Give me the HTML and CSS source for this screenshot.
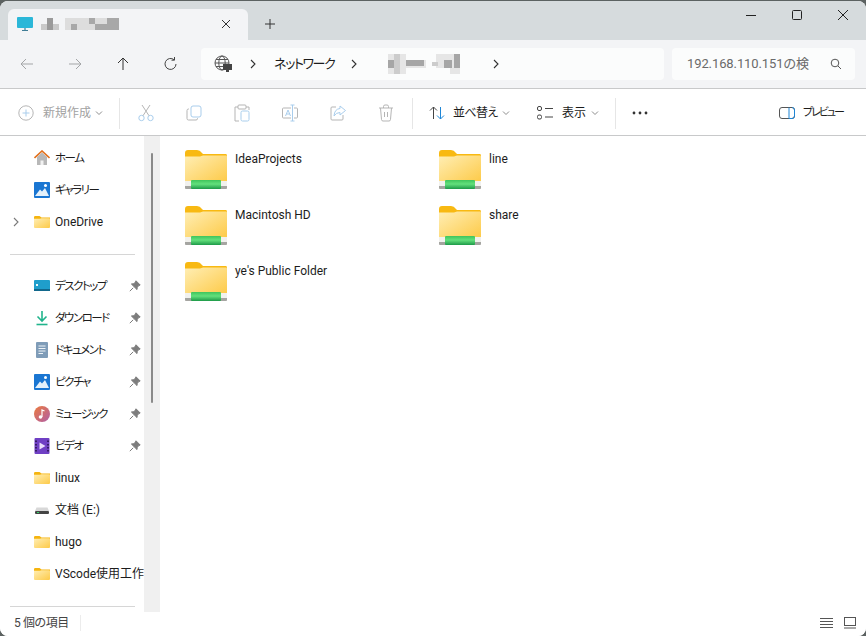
FILE: index.html
```html
<!DOCTYPE html>
<html lang="ja">
<head>
    <meta charset="UTF-8">
    <title>192.168.110.151</title>
    <link rel="stylesheet" href="styles.css">
</head>
<body>
<svg class="defs" width="0" height="0">
    <defs>
        <linearGradient id="fbody" x1="0" y1="0" x2="1" y2="1">
            <stop offset="0" stop-color="#ffeeb4"/>
            <stop offset="1" stop-color="#fdca48"/>
        </linearGradient>
        <linearGradient id="fgreen" x1="0" y1="0" x2="0" y2="1">
            <stop offset="0" stop-color="#3fc45c"/>
            <stop offset=".45" stop-color="#63e07c"/>
            <stop offset="1" stop-color="#1d9a48"/>
        </linearGradient>
        <symbol id="folder" viewBox="0 0 16 16">
            <path d="M0 3.2Q0 2 1.2 2H5.5L7.5 3.5H16V6H0Z" fill="#f5b40f"/>
            <path d="M0 4.8H6L7.5 4.3H15Q16 4.3 16 5.3V13Q16 14 15 14H1Q0 14 0 13Z" fill="url(#fbody)"/>
        </symbol>
        <symbol id="netfolder" viewBox="0 0 42 39">
            <path d="M0 3Q0 0 3 0H12Q15 0 17 3L18 4H41Q42 4 42 6V12H0Z" fill="#f8b912"/>
            <path d="M0 6.500H15L18 5.500H41Q42 5.500 42 6.500V32H0Z" fill="url(#fbody)"/>
            <path d="M0 31H42V38Q42 39 41 39H1Q0 39 0 38Z" fill="#f1f1ee"/>
            <path d="M0 36H42V38Q42 39 41 39H1Q0 39 0 38Z" fill="#a5a5a1"/>
            <rect x="6" y="30" width="30" height="9" rx="1" fill="url(#fgreen)"/>
        </symbol>
        <symbol id="pin" viewBox="0 0 12 12">
            <path d="M7 .8 11.2 5 9.9 5.6 8.3 7.2 8 9.6 2.4 4 4.8 3.7 6.4 2.1ZM4.2 7.8.8 11.2" fill="#7d7d7d" stroke="#7d7d7d"/>
        </symbol>
        <symbol id="chev" viewBox="0 0 8 12">
            <path d="M2 2 6 6 2 10" fill="none" stroke="currentColor" stroke-width="1.1"/>
        </symbol>
        <symbol id="down" viewBox="0 0 8 6">
            <path d="M1 1.5 4 4.5 7 1.5" fill="none" stroke="#8c8c8c"/>
        </symbol>
    </defs>
</svg>

<div class="window">
    <!-- tabs -->
    <div class="titlebar">
        <div class="tab">
            <svg class="tab-icon" width="16" height="16" viewBox="0 0 16 16">
                <rect y="1" width="16" height="11" rx="1" fill="#2bb7d8"/>
                <path d="M5 14.5H11M8 12V14.5" stroke="#3f7d96" stroke-width="1.2"/>
            </svg>
            <svg class="blur" width="80" height="14" viewBox="0 0 80 14">
                <path d="M0 7H18V13H0Z" fill="#c9c9c9"/>
                <path d="M6 1H12V13H6Z" fill="#9a9a9a"/>
                <path d="M24 1H78V13H24Z" fill="#dddddd"/>
                <path d="M30 7H36V13H30ZM48 1H54V7H48ZM54 7H66V13H54ZM66 1H78V13H66Z" fill="#a8a8a8"/>
            </svg>
            <svg class="tab-close" width="12" height="12" viewBox="0 0 12 12">
                <path d="M2 2 10 10M10 2 2 10" stroke="#333"/>
            </svg>
        </div>
        <svg class="tab-new" width="12" height="12" viewBox="0 0 12 12">
            <path d="M6 1V11M1 6H11" stroke="#333"/>
        </svg>
        <div class="winbtns">
            <svg width="12" height="12" viewBox="0 0 12 12"><path d="M1 6.5H11" stroke="#222"/></svg>
            <svg width="12" height="12" viewBox="0 0 12 12"><rect x="1.5" y="1.5" width="9" height="9" rx="1" fill="none" stroke="#222"/></svg>
            <svg width="12" height="12" viewBox="0 0 12 12"><path d="M1 1 11 11M11 1 1 11" stroke="#222"/></svg>
        </div>
    </div>

    <!-- address row -->
    <div class="navbar">
        <div class="navbtns">
            <svg width="16" height="16" viewBox="0 0 16 16"><path d="M14 8H2M7 3 2 8 7 13" fill="none" stroke="#a3a5a7"/></svg>
            <svg width="16" height="16" viewBox="0 0 16 16"><path d="M2 8H14M9 3 14 8 9 13" fill="none" stroke="#a3a5a7"/></svg>
            <svg width="16" height="16" viewBox="0 0 16 16"><path d="M8 14V2M3 7 8 2 13 7" fill="none" stroke="#333"/></svg>
            <svg width="16" height="16" viewBox="0 0 16 16"><path d="M13 8A5.5 5.5 0 1 1 11 3.7M11.5 1V4.2H8.5" fill="none" stroke="#444"/></svg>
        </div>
        <div class="address">
            <svg class="globe" width="18" height="18" viewBox="0 0 18 18">
                <g fill="none" stroke="#555">
                    <circle cx="8" cy="8" r="7"/>
                    <ellipse cx="8" cy="8" rx="3.2" ry="7"/>
                    <path d="M1 8H15M2 4.5H14M2 11.5H14"/>
                </g>
                <rect x="9" y="9" width="9" height="6" fill="#444"/>
                <rect x="12" y="15" width="3" height="2" fill="#444"/>
            </svg>
            <svg class="crumb-chev" width="8" height="12"><use href="#chev"/></svg>
            <span class="crumb">ネットワーク</span>
            <svg class="crumb-chev" width="8" height="12"><use href="#chev"/></svg>
            <svg class="blur crumb-blur" width="86" height="20" viewBox="0 0 86 20">
                <path d="M0 0H18V20H0ZM18 6H38V14H18ZM48 0H62V14H48ZM62 0H72V20H62Z" fill="#e6e6e6"/>
                <path d="M0 6H6V14H0ZM18 6H36V12H18ZM56 6H64V14H56ZM66 0H72V14H66Z" fill="#a6a6a6"/>
                <path d="M6 0H12V20H6ZM44 8H50V12H44Z" fill="#cccccc"/>
            </svg>
            <svg class="crumb-chev" width="8" height="12"><use href="#chev"/></svg>
        </div>
        <div class="search">
            <span>192.168.110.151の検</span>
            <svg width="12" height="12" viewBox="0 0 12 12"><circle cx="5" cy="5" r="3.8" fill="none" stroke="#555"/><path d="M8 8 11 11" stroke="#555"/></svg>
        </div>
    </div>

    <!-- command bar -->
    <div class="cmdbar">
        <div class="cmd cmd-new">
            <svg width="16" height="16" viewBox="0 0 16 16"><circle cx="8" cy="8" r="7.2" fill="none" stroke="#b5b5b5"/><path d="M8 4.5V11.5M4.5 8H11.5" stroke="#a9cdec"/></svg>
            <span class="cmd-off">新規作成</span>
            <svg class="cmd-down" width="8" height="6"><use href="#down"/></svg>
        </div>
        <div class="sep sep-a"></div>
        <div class="cmd-icons">
            <svg width="16" height="18" viewBox="0 0 16 18"><g fill="none" stroke="#a9cdec"><circle cx="3.5" cy="14" r="2.7"/><circle cx="12.5" cy="14" r="2.7"/></g><path d="M5 11.7 12 1M11 11.7 4 1" stroke="#b5b5b5" fill="none"/></svg>
            <svg width="16" height="16" viewBox="0 0 16 16"><path d="M3 4H2.5Q1 4 1 5.5V13.5Q1 15 2.5 15H10Q11.5 15 11.5 13.5V13" fill="none" stroke="#b5b5b5"/><rect x="5" y="1" width="10" height="11" rx="2" fill="none" stroke="#a9cdec"/></svg>
            <svg width="16" height="18" viewBox="0 0 16 18"><path d="M4 3H1V17H5M12 3H15V6" fill="none" stroke="#b5b5b5"/><rect x="4" y="1" width="8" height="4" rx="1" fill="none" stroke="#b5b5b5"/><rect x="7" y="7" width="8" height="10" rx="1.5" fill="none" stroke="#a9cdec"/></svg>
            <svg width="16" height="18" viewBox="0 0 16 18"><path d="M9 4H1.5Q.5 4 .5 5V13Q.5 14 1.5 14H9M12 4H14.5Q15.5 4 15.5 5V13Q15.5 14 14.5 14H12" fill="none" stroke="#b5b5b5"/><path d="M10.5 1V17M8.5 1H12.5M8.5 17H12.5M3.5 12 6 6 8.5 12M4.5 10H7.5" fill="none" stroke="#a9cdec"/></svg>
            <svg width="16" height="16" viewBox="0 0 16 16"><path d="M6 2H2Q1 2 1 3V14Q1 15 2 15H12Q13 15 13 14V10" fill="none" stroke="#b5b5b5"/><path d="M10 1 15.5 5.5 10 10V7.5Q6 7.5 4 11Q4.5 4 10 3.5Z" fill="none" stroke="#a9cdec"/></svg>
            <svg width="16" height="18" viewBox="0 0 16 18"><path d="M1 4H15M5.5 4V2.5Q5.5 1 7 1H9Q10.5 1 10.5 2.5V4M2.5 4 3.5 15.5Q3.6 17 5 17H11Q12.4 17 12.5 15.5L13.5 4M6.5 8V13M9.5 8V13" fill="none" stroke="#b5b5b5"/></svg>
        </div>
        <div class="sep"></div>
        <div class="cmd cmd-sort">
            <svg width="16" height="14" viewBox="0 0 16 14"><path d="M4.5 13V1M1 4.5 4.5 1 8 4.5" fill="none" stroke="#444"/><path d="M11.5 1V13M8 9.5 11.5 13 15 9.5" fill="none" stroke="#1f86d6"/></svg>
            <span>並べ替え</span>
            <svg class="cmd-down" width="8" height="6"><use href="#down"/></svg>
        </div>
        <div class="cmd cmd-view">
            <svg width="16" height="14" viewBox="0 0 16 14"><g fill="none" stroke="#444"><rect x=".5" y=".5" width="4" height="4" rx="1.5"/><rect x=".5" y="9" width="4" height="4" rx="1.5"/><path d="M8 2.5H16M8 11H16"/></g></svg>
            <span>表示</span>
            <svg class="cmd-down" width="8" height="6"><use href="#down"/></svg>
        </div>
        <div class="sep sep-c"></div>
        <svg class="dots" width="16" height="4" viewBox="0 0 16 4"><circle cx="2" cy="2" r="1.4" fill="#333"/><circle cx="8" cy="2" r="1.4" fill="#333"/><circle cx="14" cy="2" r="1.4" fill="#333"/></svg>
        <div class="cmd cmd-preview">
            <svg width="16" height="12" viewBox="0 0 16 12"><rect x=".5" y=".5" width="15" height="11" rx="2.5" fill="none" stroke="#555"/><path d="M10 .5V11.5M13 .5Q15.5 .5 15.5 3V9Q15.5 11.5 13 11.5H10" fill="none" stroke="#1f86d6"/></svg>
            <span>プレビュー</span>
        </div>
    </div>

    <!-- main area -->
    <div class="main">
        <div class="sidebar">
            <ul class="tree">
                <li>
                    <svg width="16" height="16" viewBox="0 0 16 16"><path d="M3 7V15H13V7L8 2.5Z" fill="#b8b8b8"/><path d="M6.5 15V10.5H9.5V15Z" fill="#f2f2f2"/><path d="M.5 8 8 1 15.5 8" fill="none" stroke="#e2701c" stroke-width="1.6"/></svg>
                    <span class="kana">ホーム</span>
                </li>
                <li>
                    <svg width="16" height="16" viewBox="0 0 16 16"><rect width="16" height="16" rx="1" fill="#1a76d2"/><path d="M1 14 6 7.5 8 9.5 11 6 15 14Z" fill="#e4f1fb"/><circle cx="11.5" cy="3.5" r="1.5" fill="#fff"/></svg>
                    <span class="kana">ギャラリー</span>
                </li>
                <li class="has-arrow">
                    <svg class="arrow" width="8" height="12"><use href="#chev"/></svg>
                    <svg width="16" height="16"><use href="#folder"/></svg>
                    <span>OneDrive</span>
                </li>
            </ul>
            <div class="side-rule"></div>
            <ul class="tree">
                <li>
                    <svg width="16" height="16" viewBox="0 0 16 16"><rect y="2" width="16" height="11" rx="1" fill="#1f9ecb"/><rect x="2" y="6" width="2" height="2" fill="#e8f8fc"/><rect y="11" width="16" height="2" fill="#12688c"/></svg>
                    <span class="kana">デスクトップ</span>
                    <svg class="pin" width="12" height="12"><use href="#pin"/></svg>
                </li>
                <li>
                    <svg width="16" height="16" viewBox="0 0 16 16"><path d="M8 1V10.5M3.5 6.5 8 11 12.5 6.5" fill="none" stroke="#21b48c" stroke-width="1.6"/><path d="M2.5 14.5H13.5" stroke="#21b48c" stroke-width="1.6"/></svg>
                    <span class="kana">ダウンロード</span>
                    <svg class="pin" width="12" height="12"><use href="#pin"/></svg>
                </li>
                <li>
                    <svg width="16" height="16" viewBox="0 0 16 16"><rect x="2" width="12" height="16" rx="1" fill="#7f9cb8"/><path d="M4.5 4H11.5M4.5 6.5H11.5M4.5 9H11.5M4.5 11.5H9" stroke="#eef3f7"/></svg>
                    <span class="kana">ドキュメント</span>
                    <svg class="pin" width="12" height="12"><use href="#pin"/></svg>
                </li>
                <li>
                    <svg width="16" height="16" viewBox="0 0 16 16"><rect width="16" height="16" rx="1" fill="#1a76d2"/><path d="M1 14 6 7.5 8 9.5 11 6 15 14Z" fill="#e4f1fb"/><circle cx="11.5" cy="3.5" r="1.5" fill="#fff"/></svg>
                    <span class="kana">ピクチャ</span>
                    <svg class="pin" width="12" height="12"><use href="#pin"/></svg>
                </li>
                <li>
                    <svg width="16" height="16" viewBox="0 0 16 16"><defs><linearGradient id="mus" x1="0" y1="0" x2="1" y2="1"><stop offset="0" stop-color="#ec7a3c"/><stop offset="1" stop-color="#b05fa8"/></linearGradient></defs><circle cx="8" cy="8" r="8" fill="url(#mus)"/><circle cx="6.5" cy="11" r="1.8" fill="#fff"/><path d="M8 11V4L10.5 5" fill="none" stroke="#fff" stroke-width="1.2"/></svg>
                    <span class="kana">ミュージック</span>
                    <svg class="pin" width="12" height="12"><use href="#pin"/></svg>
                </li>
                <li>
                    <svg width="16" height="16" viewBox="0 0 16 16"><rect x=".5" width="15" height="16" rx="1" fill="#6f3fc4"/><path d="M5.5 4.5 11.5 8 5.5 11.5Z" fill="#e9ddfb"/><path d="M2 2.5V4M2 6V7.5M2 9V10.5M2 12V13.5M14 2.5V4M14 6V7.5M14 9V10.5M14 12V13.5" stroke="#241046" stroke-width="1.5"/></svg>
                    <span class="kana">ビデオ</span>
                    <svg class="pin" width="12" height="12"><use href="#pin"/></svg>
                </li>
                <li>
                    <svg width="16" height="16"><use href="#folder"/></svg>
                    <span>linux</span>
                </li>
                <li>
                    <svg width="16" height="16" viewBox="0 0 16 16"><path d="M2.5 5.5H13.5L15 9H1Z" fill="#d8d8d8"/><rect x="1" y="9" width="14" height="3" rx="1" fill="#444"/><rect x="3" y="10" width="2" height="1" fill="#35d46a"/></svg>
                    <span>文档 (E:)</span>
                </li>
                <li>
                    <svg width="16" height="16"><use href="#folder"/></svg>
                    <span>hugo</span>
                </li>
                <li>
                    <svg width="16" height="16"><use href="#folder"/></svg>
                    <span>VScode使用工作</span>
                </li>
            </ul>
            <div class="side-rule"></div>
        </div>
        <div class="scrolltrack"><div class="thumb"></div></div>
        <div class="files">
            <div class="file"><svg width="42" height="39"><use href="#netfolder"/></svg><span>IdeaProjects</span></div>
            <div class="file"><svg width="42" height="39"><use href="#netfolder"/></svg><span>line</span></div>
            <div class="file"><svg width="42" height="39"><use href="#netfolder"/></svg><span>Macintosh HD</span></div>
            <div class="file"><svg width="42" height="39"><use href="#netfolder"/></svg><span>share</span></div>
            <div class="file"><svg width="42" height="39"><use href="#netfolder"/></svg><span>ye's Public Folder</span></div>
        </div>
    </div>

    <!-- status bar -->
    <div class="statusbar">
        <span class="count">5 個の項目</span>
        <div class="status-sep"></div>
        <div class="viewbtns">
            <svg width="13" height="12" viewBox="0 0 13 12"><path d="M0 1.5H13M0 4.5H13M0 7.5H13M0 10.5H13" stroke="#555"/></svg>
            <svg width="13" height="12" viewBox="0 0 13 12"><rect x=".5" y=".5" width="11" height="8" fill="none" stroke="#555"/><path d="M0 11H12" stroke="#555"/></svg>
        </div>
    </div>
</div>
</body>
</html>
```

FILE: styles.css
```css
html, body {
    margin: 0;
    height: 100%;
    overflow: hidden;
    background-color: #5c6261;
}
body {
    font-family: Roboto, "Noto Sans CJK JP", sans-serif;
    font-size: 12px;
    line-height: 16px;
    font-feature-settings: "palt";
    color: #1c1c1c;
}
ul {
    list-style-type: none;
    margin: 0;
    padding: 0;
}
svg {
    display: block;
    flex: none;
}
.defs {
    position: absolute;
}
.window {
    height: 635px;
    margin-top: 1px;
    display: flex;
    flex-direction: column;
    background-color: #fff;
    border-radius: 8px;
    overflow: hidden;
}

/* tabs */
.titlebar {
    height: 39px;
    flex: none;
    display: flex;
    align-items: flex-end;
    padding-left: 8px;
    background-color: #d6dbdd;
}
.tab {
    width: 240px;
    height: 31px;
    box-sizing: border-box;
    display: flex;
    align-items: center;
    padding: 0 16px 2px 9px;
    background-color: #f3f4f6;
    border-radius: 6px 6px 0 0;
}
.tab-icon {
    margin-right: 8px;
}
.tab-close {
    margin-left: auto;
}
.tab-new {
    margin: 0 0 10px 16px;
}
.winbtns {
    margin-left: auto;
    align-self: flex-start;
    display: flex;
    gap: 34px;
    padding: 8px 17px 0 0;
}

/* address row */
.navbar {
    height: 48px;
    flex: none;
    display: flex;
    align-items: center;
    background-color: #f3f4f6;
    border-bottom: 1px solid #c8c9ca;
}
.navbtns {
    width: 201px;
    flex: none;
    box-sizing: border-box;
    display: flex;
    gap: 32px;
    padding-left: 19px;
}
.address {
    width: 463px;
    height: 32px;
    box-sizing: border-box;
    display: flex;
    align-items: center;
    padding-left: 13px;
    color: #333;
    background-color: #fbfcfc;
    border-radius: 4px;
}
.globe {
    margin-right: 17px;
}
.crumb {
    width: 61px;
    margin: 0 15px 0 17px;
    font-size: 13px;
    letter-spacing: -1.4px;
    white-space: nowrap;
    color: #1c1c1c;
}
.crumb-blur {
    margin: 0 18px 0 30px;
}
.search {
    width: 183px;
    height: 32px;
    margin-left: 8px;
    box-sizing: border-box;
    display: flex;
    align-items: center;
    padding: 0 13px 0 15px;
    font-size: 13px;
    letter-spacing: -.1px;
    color: #6a6a6a;
    background-color: #fbfcfc;
    border-radius: 4px;
}
.search svg {
    margin-left: auto;
}

/* command bar */
.cmdbar {
    height: 47px;
    flex: none;
    box-sizing: border-box;
    padding-top: 2px;
    display: flex;
    align-items: center;
    background-color: #fff;
    border-bottom: 1px solid #c8c9ca;
}
.cmd {
    display: flex;
    align-items: center;
    white-space: nowrap;
}
.cmd-new {
    width: 101px;
    flex: none;
    box-sizing: border-box;
    padding-left: 18px;
}
.cmd-new span {
    width: 48px;
    margin: 0 4px 0 9px;
}
.cmd-off {
    color: #a2a2a2;
}
.sep {
    width: 1px;
    height: 31px;
    flex: none;
    background-color: #e6e6e6;
}
.sep-a {
    margin-left: 18px;
}
.cmd-icons {
    display: flex;
    align-items: center;
    gap: 32px;
    padding: 0 18px;
}
.cmd-sort {
    margin-left: 16px;
}
.cmd-sort span {
    width: 44px;
    margin: 0 5px 0 8px;
    letter-spacing: -.6px;
}
.cmd-view {
    margin-left: 27px;
}
.cmd-view span {
    width: 24px;
    margin: 0 5px 0 9px;
}
.sep-c {
    margin-left: 16px;
}
.dots {
    margin-left: 16px;
}
.cmd-preview {
    margin: 0 23px 0 auto;
}
.cmd-preview span {
    width: 40px;
    margin-left: 8px;
    font-size: 11px;
    letter-spacing: -2px;
}

/* main area */
.main {
    flex: 1;
    min-height: 0;
    display: flex;
    background-color: #fff;
}
.sidebar {
    width: 144px;
    flex: none;
    padding-top: 6px;
}
.tree li {
    height: 32px;
    display: flex;
    align-items: center;
    padding-left: 34px;
    white-space: nowrap;
    position: relative;
}
.tree li span {
    margin-left: 5px;
}
.tree li .kana {
    font-size: 11.5px;
    letter-spacing: -1.5px;
}
.arrow {
    position: absolute;
    left: 12px;
    top: 10px;
    color: #7a7a7a;
}
.pin {
    position: absolute;
    left: 129px;
    top: 10px;
}
.side-rule {
    height: 1px;
    margin: 16px 9px 15px 10px;
    background-color: #d6d6d6;
}
.scrolltrack {
    width: 16px;
    flex: none;
    background-color: #f0f0f0;
}
.thumb {
    width: 2px;
    height: 250px;
    margin: 17px 0 0 7px;
    background-color: #8a8a8a;
    border-radius: 1px;
}
.files {
    flex: 1;
    display: grid;
    grid-template-columns: repeat(2, 254px);
    grid-auto-rows: 56px;
    align-content: start;
    padding: 14px 0 0 25px;
}
.file {
    display: flex;
    gap: 8px;
}
.file span {
    margin-top: 1px;
}

/* status bar */
.statusbar {
    height: 24px;
    flex: none;
    box-sizing: border-box;
    padding: 0 0 2px 14px;
    display: flex;
    align-items: center;
    color: #444;
    background-color: #fff;
}
.count {
    letter-spacing: -.4px;
}
.status-sep {
    width: 1px;
    height: 16px;
    margin-left: 11px;
    background-color: #ececec;
}
.viewbtns {
    margin: 0 9px 0 auto;
    display: flex;
    gap: 11px;
}
```
